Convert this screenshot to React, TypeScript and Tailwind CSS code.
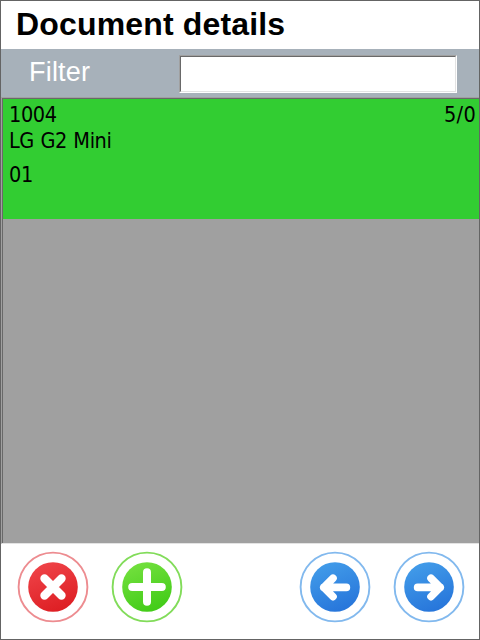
import type { ReactNode } from 'react';

type RoundButtonProps = {
  id: string;
  label: string;
  ring: string;
  from: string;
  to: string;
  children: ReactNode;
};

function RoundButton({ id, label, ring, from, to, children }: RoundButtonProps) {
  return (
    <button type="button" aria-label={label} className="block size-[72px]">
      <svg viewBox="-36 -36 72 72" className="block size-[72px]">
        <defs>
          <linearGradient id={id} x1="0.3" y1="0" x2="0.7" y2="1">
            <stop offset="0" stopColor={from} />
            <stop offset="1" stopColor={to} />
          </linearGradient>
        </defs>
        <circle r="34.4" fill="#fff" stroke={ring} strokeWidth="1.9" />
        <circle r="24.8" fill={`url(#${id})`} />
        <g fill="none" stroke="#fff" strokeLinecap="round" strokeLinejoin="round">
          {children}
        </g>
      </svg>
    </button>
  );
}

export default function App() {
  return (
    <div className="flex h-[640px] w-[480px] flex-col overflow-hidden border border-[#646464] bg-white text-black">
      <header className="h-12 shrink-0 pl-[15px]">
        <h1 className="whitespace-nowrap font-['Liberation_Sans',Arial,sans-serif] text-[32px] leading-[46px] font-bold tracking-[0.16px]">
          Document details
        </h1>
      </header>

      <div className="flex h-12 shrink-0 items-start bg-[#a7b1ba] pl-7">
        <label
          htmlFor="filter"
          className="w-[150px] font-['Liberation_Sans',Arial,sans-serif] text-[27px] leading-[46px] tracking-[0.2px] text-white"
        >
          Filter
        </label>
        <div className="mt-1.5 h-[38px] w-[278px] border border-t-[#a0a0a0] border-r-white border-b-white border-l-[#a0a0a0]">
          <input
            id="filter"
            type="text"
            className="block h-9 w-full border border-t-[#696969] border-r-[#e3e3e3] border-b-[#e3e3e3] border-l-[#696969] bg-white px-1 outline-none"
          />
        </div>
      </div>

      <main className="h-[447px] shrink-0 border-t border-b border-l border-t-[#a0a0a0] border-b-[#e3e3e3] border-l-[#a0a0a0] bg-[#a0a0a0]">
        <div className="h-full border-t border-l border-[#696969]">
          <div className="h-[120px] bg-[#32cd32] pt-[3px] pr-[3px] pl-1.5 font-['DejaVu_Sans_Condensed','DejaVu_Sans',Tahoma,sans-serif] text-[21.5px] leading-[26px] tracking-[-0.4px]">
            <div className="flex justify-between">
              <span>1004</span>
              <span className="tracking-[0.3px]">5/0</span>
            </div>
            <div className="[word-spacing:0.7px]">LG G2 Mini</div>
            <div className="mt-2">01</div>
          </div>
        </div>
      </main>

      <footer className="flex grow items-start gap-[22px] pt-[7px] pl-4">
        <RoundButton id="red" label="Cancel" ring="#ed8c90" from="#ef4348" to="#dd1d22">
          <path d="M-8.5-8.5 8.5 8.5M8.5-8.5-8.5 8.5" strokeWidth="8.4" />
        </RoundButton>
        <RoundButton id="green" label="Add" ring="#82dc5a" from="#73e03e" to="#40cb16">
          <path d="M-14.8 0H14.8M0-14.8V14.8" strokeWidth="8" />
        </RoundButton>
        <div className="size-[72px]" />
        <RoundButton id="back" label="Previous" ring="#82b9ee" from="#429ce9" to="#2674da">
          <path d="M-2-8.8-11.2 .4-2 9.6M-11.2 .4H11.4" strokeWidth="7.6" />
        </RoundButton>
        <RoundButton id="next" label="Next" ring="#82b9ee" from="#429ce9" to="#2674da">
          <path d="M2-8.8 11.2 .4 2 9.6M11.2 .4H-11.4" strokeWidth="7.6" />
        </RoundButton>
      </footer>
    </div>
  );
}
